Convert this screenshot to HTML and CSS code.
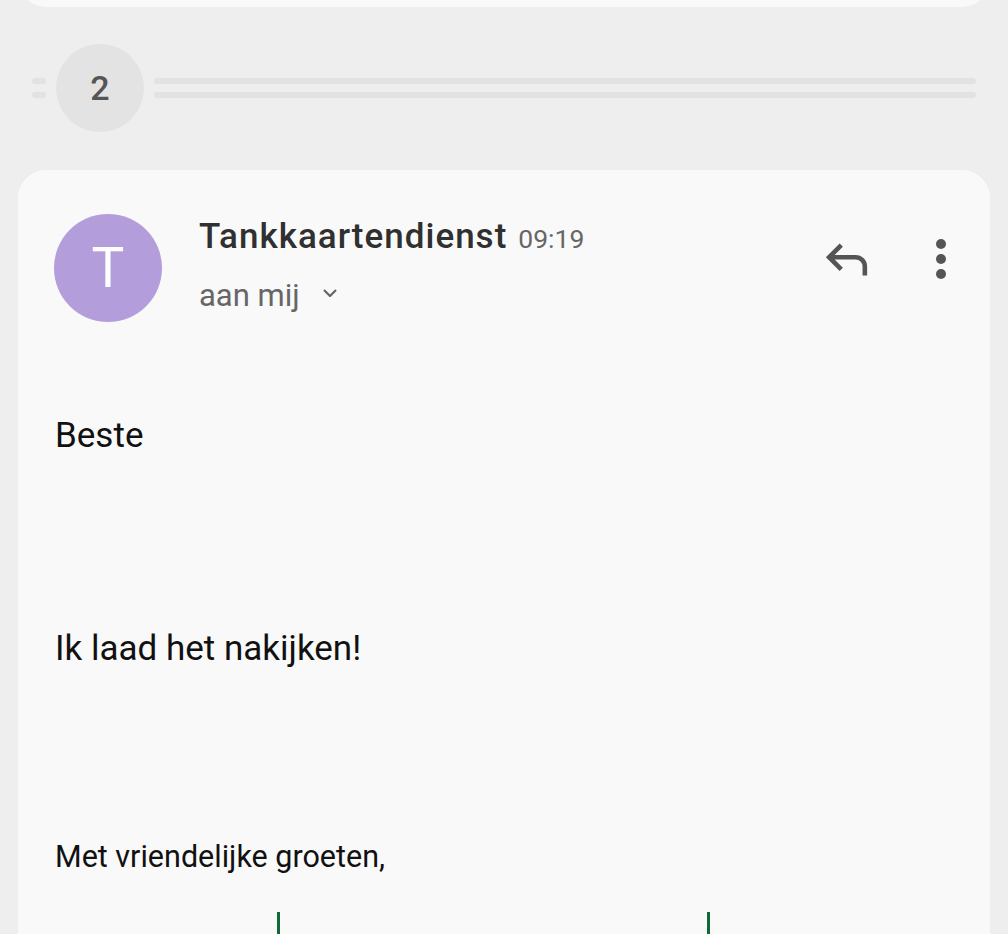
FILE: index.html
```html
<!DOCTYPE html>
<html lang="nl">
<head>
<meta charset="utf-8">
<title>Tankkaartendienst</title>
<link rel="stylesheet" href="styles.css">
</head>
<body>
<div class="prev-card"></div>

<div class="collapsed">
  <div class="dashes"><span></span><span></span></div>
  <div class="count">2</div>
  <div class="lines"><span></span><span></span></div>
</div>

<div class="card">
  <div class="header">
    <div class="avatar">T</div>
    <div class="meta">
      <div class="from"><span class="name">Tankkaartendienst</span><span class="time">09:19</span></div>
      <div class="to">aan mij<svg class="chev" viewBox="0 0 14 8" width="14" height="8"><path d="M1 1l6 6 6-6" fill="none" stroke="#666" stroke-width="2.2"/></svg></div>
    </div>
    <div class="actions">
      <svg class="reply" viewBox="0 -960 960 960" width="55" height="55"><path fill="#555" d="M760-200v-160q0-50-35-85t-85-35H273l144 144-57 56-240-240 240-240 57 56-144 144h367q83 0 141.5 58.5T840-360v160h-80Z"/></svg>
      <svg class="more" viewBox="0 0 24 24" width="60" height="60"><circle cx="12" cy="6" r="2" fill="#555"/><circle cx="12" cy="12" r="2" fill="#555"/><circle cx="12" cy="18" r="2" fill="#555"/></svg>
    </div>
  </div>
  <div class="body">
    <p class="big first">Beste</p>
    <p class="big second">Ik laad het nakijken!</p>
    <p class="small">Met vriendelijke groeten,</p>
    <div class="table"><span class="bar b1"></span><span class="bar b2"></span></div>
  </div>
</div>
</body>
</html>
```

FILE: styles.css
```css
html, body {
  margin: 0;
  padding: 0;
  background: #eeeeee;
  font-family: Roboto, "Noto Sans", sans-serif;
  overflow: hidden;
}

.prev-card {
  margin: -60px 18px 0 18px;
  height: 67px;
  background: #f9f9f9;
  border-radius: 0 0 28px 28px;
}

.collapsed {
  display: flex;
  align-items: center;
  height: 88px;
  margin: 37px 32px 38px 32px;
}

.dashes, .lines {
  display: flex;
  flex-direction: column;
  gap: 8px;
}
.dashes { width: 14px; }
.lines { flex: 1; }
.dashes span, .lines span {
  display: block;
  height: 6px;
  border-radius: 3px;
  background: #e2e2e2;
}
.count {
  width: 88px;
  height: 88px;
  border-radius: 50%;
  background: #e3e3e3;
  margin: 0 10px;
  display: flex;
  align-items: center;
  justify-content: center;
  font-size: 34px;
  font-weight: 500;
  color: #555;
}

.card {
  margin: 0 18px;
  background: #f9f9f9;
  border-radius: 28px 28px 0 0;
  padding: 44px 19px 0 36px;
  height: 800px;
}

.header {
  display: flex;
  align-items: flex-start;
}
.avatar {
  width: 108px;
  height: 108px;
  border-radius: 50%;
  background: #b39ddb;
  color: #fff;
  font-size: 55px;
  font-weight: 400;
  display: flex;
  align-items: center;
  justify-content: center;
  flex: none;
}
.meta {
  flex: 1;
  margin-left: 37px;
  padding-top: 3px;
}
.from {
  line-height: 40px;
  white-space: nowrap;
}
.name {
  font-size: 35px;
  font-weight: 500;
  letter-spacing: 1px;
  color: #303030;
}
.time {
  font-size: 26.5px;
  color: #666;
  margin-left: 11px;
}
.to {
  margin-top: 13px;
  font-size: 31px;
  line-height: 40px;
  color: #666;
}
.chev {
  margin-left: 23px;
  vertical-align: 9px;
}
.actions {
  display: flex;
  align-items: flex-start;
  gap: 37px;
  margin-top: 15px;
}
.reply { margin-top: 3px; display: block; }
.more { display: block; }

.body {
  margin-left: 1px;
}
.body p { margin: 0; color: #111; }
.body .big {
  font-size: 35px;
  line-height: 42px;
}
.body .first { margin-top: 93px; }
.body .second { margin-top: 171px; }
.body .small {
  font-size: 30.5px;
  line-height: 34px;
  margin-top: 170px;
}
.table {
  position: relative;
  margin-top: 38px;
  height: 30px;
}
.bar {
  position: absolute;
  top: 0;
  width: 3px;
  height: 30px;
  background: #0d6b3b;
}
.b1 { left: 222px; }
.b2 { left: 652px; }
```
